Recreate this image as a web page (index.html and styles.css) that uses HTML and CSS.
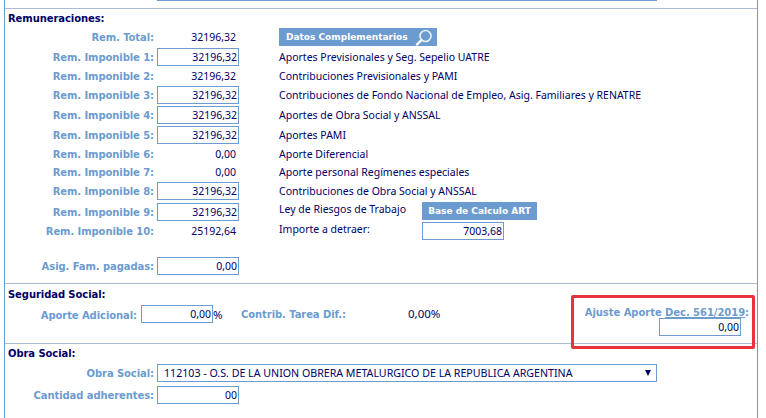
FILE: index.html
```html
<!DOCTYPE html>
<html lang="es">
<head>
<meta charset="utf-8">
<title>Remuneraciones</title>
<link rel="stylesheet" href="styles.css">
</head>
<body>
<div class="panel">
  <div class="top"><div class="top-bar"></div></div>

  <section class="sec sec-rem">
    <h3>Remuneraciones:</h3>
    <div class="row h20">
      <label class="lab">Rem. Total:</label><span class="val">32196,32</span>
      <div class="desc"><button class="btn btn-wide" type="button"><span>Datos Complementarios</span>
        <svg class="lens" width="18" height="17" viewBox="0 0 18 17"><circle cx="10.5" cy="7" r="5.5" fill="none" stroke="#eaf1f9" stroke-width="1.6"/><path d="M6.5 11 L2 15.5" stroke="#ffffff" stroke-width="2.4" stroke-linecap="round"/></svg></button></div>
    </div>
    <div class="row h19">
      <label class="lab">Rem. Imponible 1:</label><input class="inp" value="32196,32">
      <div class="desc">Aportes Previsionales y Seg. Sepelio UATRE</div>
    </div>
    <div class="row h19">
      <label class="lab">Rem. Imponible 2:</label><span class="val">32196,32</span>
      <div class="desc">Contribuciones Previsionales y PAMI</div>
    </div>
    <div class="row h20">
      <label class="lab">Rem. Imponible 3:</label><input class="inp" value="32196,32">
      <div class="desc">Contribuciones de Fondo Nacional de Empleo, Asig. Familiares y RENATRE</div>
    </div>
    <div class="row h20">
      <label class="lab">Rem. Imponible 4:</label><input class="inp" value="32196,32">
      <div class="desc">Aportes de Obra Social y ANSSAL</div>
    </div>
    <div class="row h19">
      <label class="lab">Rem. Imponible 5:</label><input class="inp" value="32196,32">
      <div class="desc">Aportes PAMI</div>
    </div>
    <div class="row h18">
      <label class="lab">Rem. Imponible 6:</label><span class="val">0,00</span>
      <div class="desc">Aporte Diferencial</div>
    </div>
    <div class="row h19">
      <label class="lab">Rem. Imponible 7:</label><span class="val">0,00</span>
      <div class="desc">Aporte personal Regímenes especiales</div>
    </div>
    <div class="row h20">
      <label class="lab">Rem. Imponible 8:</label><input class="inp" value="32196,32">
      <div class="desc">Contribuciones de Obra Social y ANSSAL</div>
    </div>
    <div class="row h20 r9">
      <label class="lab">Rem. Imponible 9:</label><input class="inp" value="32196,32">
      <div class="desc split"><span class="dtext up">Ley de Riesgos de Trabajo</span><button class="btn btn-art" type="button">Base de Calculo ART</button></div>
    </div>
    <div class="row h35">
      <label class="lab">Rem. Imponible 10:</label><span class="val">25192,64</span>
      <div class="desc split"><span class="dtext up">Importe a detraer:</span><input class="inp" value="7003,68"></div>
    </div>
    <div class="row">
      <label class="lab">Asig. Fam. pagadas:</label><input class="inp" value="0,00">
    </div>
  </section>

  <section class="sec sec-seg">
    <h3>Seguridad Social:</h3>
    <div class="seg-row">
      <label class="lab lab-ap">Aporte Adicional:</label><input class="inp inp-sm" value="0,00"><span class="pct">%</span>
      <label class="lab lab-con">Contrib. Tarea Dif.:</label><span class="con-val">0,00%</span>
      <div class="ajuste">
        <div class="aj-label">Ajuste Aporte <u>Dec. 561/2019</u>:</div>
        <input class="inp aj-inp" value="0,00">
      </div>
    </div>
  </section>

  <section class="sec sec-obra">
    <h3>Obra Social:</h3>
    <div class="row h22">
      <label class="lab">Obra Social:</label>
      <div class="sel-wrap"><select class="sel"><option>112103 - O.S. DE LA UNION OBRERA METALURGICO DE LA REPUBLICA ARGENTINA</option></select></div>
    </div>
    <div class="row">
      <label class="lab">Cantidad adherentes:</label><input class="inp inp-ad" value="00">
    </div>
  </section>

  <div class="redbox"></div>
</div>
</body>
</html>
```
FILE: styles.css
```css
* { box-sizing: border-box; }
html, body { margin: 0; height: 100%; background: #fff; overflow: hidden; }
body { font-family: "Noto Sans", "DejaVu Sans", sans-serif; font-size: 10.5px; color: #000066; }

.panel {
  position: relative;
  margin-left: 4px;
  width: 754px;
  height: 418px;
  border-left: 1px solid #6c9bd0;
  border-right: 1px solid #6c9bd0;
}
.top { height: 8px; padding-left: 152px; }
.top-bar { width: 500px; height: 1px; background: #6c9bd0; }

.sec { border-top: 1px solid #a9bdd6; padding-left: 3px; }
.sec-rem { height: 275px; }
.sec-seg { height: 60px; padding-top: 1px; }
.sec-obra { height: 75px; }

h3 {
  margin: 0;
  height: 19px;
  font: bold 10px/20px "DejaVu Sans", sans-serif;
  letter-spacing: -0.08px;
  color: #000066;
}
.sec-seg h3 { height: 20px; }
.sec-obra h3 { height: 20px; }

.row { display: flex; align-items: flex-start; height: 18px; }
.h18 { height: 18px; }
.h19 { height: 19px; }
.h20 { height: 20px; }
.h22 { height: 22px; }
.h35 { height: 35px; }

.lab {
  flex: none;
  width: 147px;
  padding-right: 1px;
  text-align: right;
  font: bold 10px/20px "DejaVu Sans", sans-serif;
  letter-spacing: -0.08px;
  color: #6c9bd0;
}
.val {
  flex: none;
  width: 82px;
  margin-left: 2px;
  padding-right: 3px;
  text-align: right;
  line-height: 18px;
  color: #000066;
}
.inp {
  flex: none;
  display: block;
  width: 82px;
  height: 18px;
  margin: 0 0 0 2px;
  padding: 0 1px 0 0;
  border: 1px solid #6c9bd0;
  background: #fff;
  text-align: right;
  font: 10.5px "Noto Sans", sans-serif;
  color: #000066;
  outline: 0;
  border-radius: 0;
}
.desc { flex: none; margin-left: 40px; line-height: 18px; white-space: nowrap; }
.split { display: flex; align-items: flex-start; }
.dtext { width: 143px; }
.up { line-height: 14px; }
.split .inp { margin-left: 0; }

.btn {
  display: flex;
  align-items: center;
  height: 18px;
  margin: 0;
  padding: 0;
  border: 0;
  background: #6c9bd0;
  color: #fff;
  font: bold 9px "DejaVu Sans", sans-serif;
  white-space: nowrap;
}
.btn-wide { width: 158px; padding-left: 7px; gap: 7px; }
.lens { flex: none; }
.btn-art { width: 115px; justify-content: center; }

.r9 > .lab, .r9 > .inp { margin-top: 1px; }

.seg-row { position: relative; display: flex; align-items: flex-start; height: 38px; }
.lab-ap { width: 133px; padding-right: 4px; line-height: 22px; }
.inp-sm { width: 72px; margin-left: 0; }
.pct { width: 28px; font-size: 11.5px; line-height: 20px; color: #000066; }
.lab-con { width: 167px; padding: 0; text-align: left; }
.con-val { font-size: 11.5px; line-height: 18px; }
.ajuste { position: absolute; right: 8px; top: 0; width: 172px; text-align: right; }
.aj-label { height: 13px; font: bold 10px/15px "DejaVu Sans", sans-serif; letter-spacing: -0.05px; color: #6c9bd0; white-space: nowrap; }
.aj-inp { margin: 0 8px 0 auto; }

.sel-wrap { position: relative; margin-left: 2px; }
.sel-wrap::after {
  content: "";
  position: absolute;
  right: 6px;
  top: 6px;
  border-left: 3.5px solid transparent;
  border-right: 3.5px solid transparent;
  border-top: 6px solid #000066;
}
.sel {
  display: block;
  appearance: none;
  width: 500px;
  height: 18px;
  padding: 0 0 0 6px;
  border: 1px solid #6c9bd0;
  border-radius: 0;
  background: #fff;
  font: 10.65px "Noto Sans", sans-serif;
  color: #000066;
}
.inp-ad { margin-left: 2px; }

.redbox {
  position: absolute;
  left: 566px;
  top: 295px;
  width: 184px;
  height: 54px;
  border: 3px solid #e8333c;
  border-radius: 2px;
}
```
